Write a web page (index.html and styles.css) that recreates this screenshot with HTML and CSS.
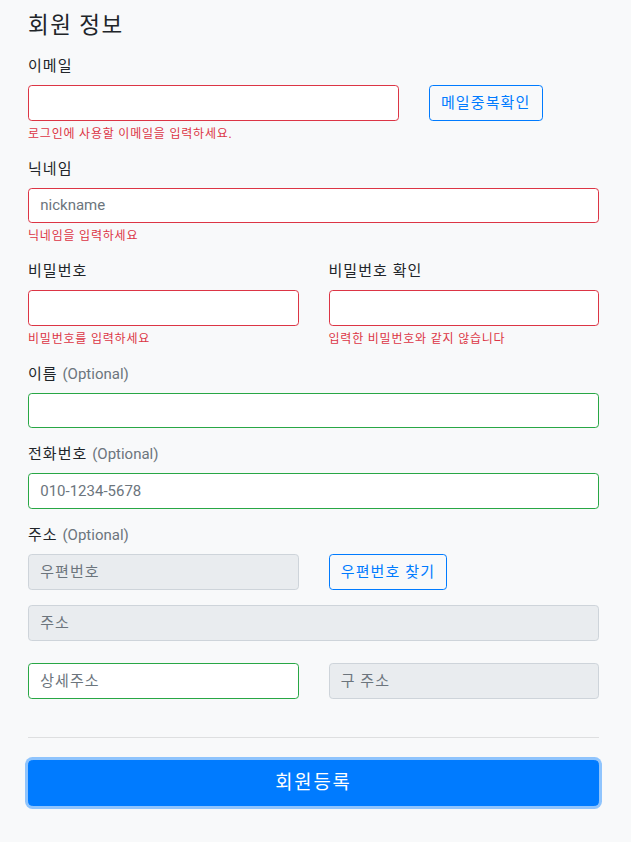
FILE: index.html
```html
<!DOCTYPE html>
<html lang="ko">
<head>
<meta charset="utf-8">
<title>회원 정보</title>
<link rel="stylesheet" href="styles.css">
</head>
<body>
<div class="page">
  <h4 class="title">회원 정보</h4>
  <form class="form">
    <div class="group">
      <label class="label">이메일</label>
      <div class="row">
        <div class="col col-8">
          <input class="field is-invalid" type="email">
          <div class="feedback">로그인에 사용할 이메일을 입력하세요.</div>
        </div>
        <div class="col col-4">
          <button type="button" class="btn btn-outline">메일중복확인</button>
        </div>
      </div>
    </div>

    <div class="group">
      <label class="label">닉네임</label>
      <input class="field latin is-invalid" type="text" placeholder="nickname">
      <div class="feedback">닉네임을 입력하세요</div>
    </div>

    <div class="row">
      <div class="col col-6 group">
        <label class="label">비밀번호</label>
        <input class="field is-invalid" type="password">
        <div class="feedback">비밀번호를 입력하세요</div>
      </div>
      <div class="col col-6 group">
        <label class="label">비밀번호 확인</label>
        <input class="field is-invalid" type="password">
        <div class="feedback">입력한 비밀번호와 같지 않습니다</div>
      </div>
    </div>

    <div class="group">
      <label class="label">이름 <span class="muted">(Optional)</span></label>
      <input class="field is-valid" type="text">
    </div>

    <div class="group">
      <label class="label">전화번호 <span class="muted">(Optional)</span></label>
      <input class="field latin is-valid" type="tel" placeholder="010-1234-5678">
    </div>

    <div class="group">
      <label class="label">주소 <span class="muted">(Optional)</span></label>
      <div class="row row-gap">
        <div class="col col-6">
          <input class="field readonly" type="text" placeholder="우편번호" readonly>
        </div>
        <div class="col col-6">
          <button type="button" class="btn btn-outline">우편번호 찾기</button>
        </div>
      </div>
      <input class="field readonly addr" type="text" placeholder="주소" readonly>
      <div class="row">
        <div class="col col-6">
          <input class="field is-valid" type="text" placeholder="상세주소">
        </div>
        <div class="col col-6">
          <input class="field readonly" type="text" placeholder="구 주소" readonly>
        </div>
      </div>
    </div>

    <hr class="divider">

    <button type="submit" class="btn btn-primary btn-lg btn-block">회원등록</button>
  </form>
</div>
</body>
</html>
```

FILE: styles.css
```css
html {
  font-size: 15px;
}

* {
  box-sizing: border-box;
}

body {
  margin: 0;
  background: #f8f9fa;
  color: #212529;
  font-family: Roboto, "Noto Sans CJK KR", sans-serif;
  font-size: 1rem;
  line-height: 1.5;
  letter-spacing: .07em;
}

.page {
  padding: 12px 32px 36px 28px;
}

.title {
  margin: 0 0 16px;
  font-size: 1.5rem;
  font-weight: 400;
  line-height: 1.2;
  letter-spacing: .065em;
}

.form {
  margin: 0;
}

.group {
  margin-bottom: 1rem;
}

.label {
  display: inline-block;
  margin-bottom: .5rem;
}

.muted {
  color: #6c757d;
  letter-spacing: 0;
}

.row {
  display: flex;
  margin: 0 -15px;
}

.row-gap {
  margin-bottom: 1rem;
}

.col {
  padding: 0 15px;
  min-width: 0;
}

.col-8 { flex: 0 0 66.6667%; }
.col-4 { flex: 0 0 33.3333%; }
.col-6 { flex: 0 0 50%; }

.field {
  display: block;
  width: 100%;
  height: calc(1.5em + .75rem + 2px);
  padding: .375rem .75rem;
  font-family: inherit;
  font-size: 1rem;
  line-height: 1.5;
  letter-spacing: .07em;
  color: #495057;
  background: #fff;
  border: 1px solid #ced4da;
  border-radius: .25rem;
  outline: none;
}

.field.latin {
  letter-spacing: 0;
}

.field::placeholder {
  color: #6c757d;
  opacity: 1;
}

.is-invalid {
  border-color: #dc3545;
}

.is-valid {
  border-color: #28a745;
}

.readonly {
  background: #e9ecef;
}

.addr {
  margin-bottom: 1.5rem;
}

.feedback {
  margin-top: .25rem;
  font-size: 80%;
  letter-spacing: .066em;
  color: #dc3545;
}

.btn {
  display: inline-block;
  padding: .375rem .75rem;
  font-family: inherit;
  font-size: 1rem;
  line-height: 1.5;
  letter-spacing: .075em;
  border: 1px solid transparent;
  border-radius: .25rem;
  background: transparent;
  cursor: pointer;
}

.btn-outline {
  color: #007bff;
  border-color: #007bff;
}

.btn-primary {
  color: #fff;
  background: #007bff;
  border-color: #007bff;
  box-shadow: 0 0 0 .2rem rgba(38, 143, 255, .5);
}

.btn-lg {
  height: 46px;
  padding: 0 1rem;
  font-size: 1.25rem;
  line-height: 44px;
  letter-spacing: .1em;
  border-radius: .3rem;
}

.btn-block {
  display: block;
  width: 100%;
}

.divider {
  margin: 38px 0 22px;
  border: 0;
  border-top: 1px solid rgba(0, 0, 0, .1);
}
```
